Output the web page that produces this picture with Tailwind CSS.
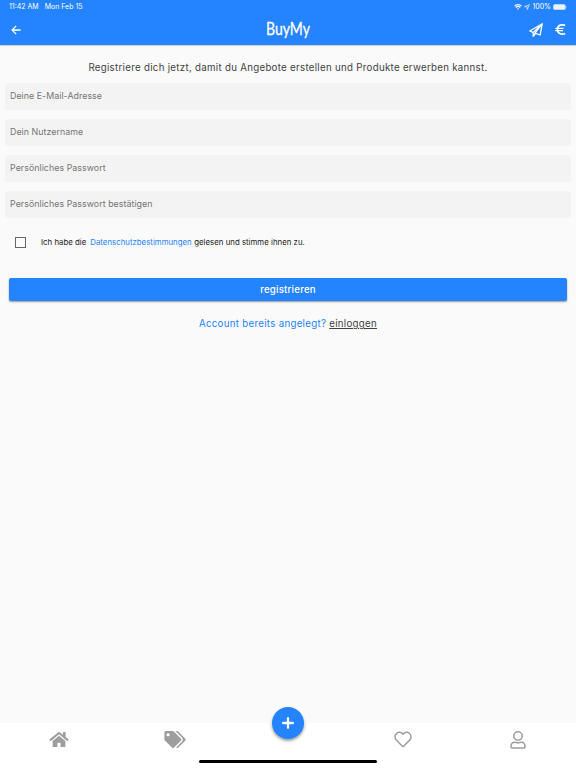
<!DOCTYPE html>
<html lang="de">
<head>
  <meta charset="UTF-8" />
  <meta name="viewport" content="width=device-width, initial-scale=1.0"/>
  <title>BuyMy</title>
  <script src="https://cdn.jsdelivr.net/npm/@tailwindcss/browser@4"></script>
</head>
<body class="bg-[#fafafa] font-['Inter',sans-serif] text-[#424242]">
  <div class="flex h-screen flex-col overflow-hidden">

    <header class="h-[45px] shrink-0 bg-[#2483ff] text-white shadow-[0_1px_1px_rgba(0,0,0,0.15)]">
      <div class="flex h-[14px] items-center justify-between px-[9px] text-[7px] leading-[14px]">
        <div class="flex gap-[6px]">
          <span>11:42 AM</span>
          <span>Mon Feb 15</span>
        </div>
        <div class="flex items-center gap-[2px]">
          <svg class="h-[6px] w-[8px]" viewBox="0 0 16 12" fill="none" stroke="currentColor" stroke-width="2.4">
            <path d="M1 4.2a10 10 0 0 1 14 0M3.6 7a6.3 6.3 0 0 1 8.8 0"/>
            <path d="M8 11.5L5.8 9.3a3.2 3.2 0 0 1 4.4 0z" fill="currentColor" stroke="none"/>
          </svg>
          <svg class="h-[6px] w-[6px]" viewBox="0 0 12 12" fill="none" stroke="currentColor" stroke-width="1.3">
            <path d="M11 1L1 5.5h5.5V11z"/>
          </svg>
          <span>100%</span>
          <svg class="h-[6px] w-[14px]" viewBox="0 0 14 6">
            <rect x=".25" y=".25" width="12.3" height="5.5" rx="1.5" fill="#fff" fill-opacity=".9"/>
            <path d="M13.2 2v2q.7-.3.7-1t-.7-1z" fill="#fff" fill-opacity=".6"/>
          </svg>
        </div>
      </div>

      <div class="grid h-[31px] grid-cols-3 items-center pl-[11px] pr-[10px]">
        <svg class="h-[10px] w-[10px]" viewBox="0 0 10 10" fill="none" stroke="currentColor" stroke-width="1.3">
          <path d="M9.6 5H1.2M5.2.9L1.1 5l4.1 4.1"/>
        </svg>
        <svg class="h-[31px] w-[64px] justify-self-center" viewBox="0 0 64 31">
          <text x="9" y="20.5" textLength="44" lengthAdjust="spacingAndGlyphs" font-family="Lato, sans-serif" font-size="17" fill="#fff" stroke="#fff" stroke-width=".3" stroke-linejoin="round">BuyMy</text>
        </svg>
        <div class="flex items-center justify-end gap-[12px]">
          <svg class="h-[14px] w-[14px]" viewBox="0 0 14 14" fill="none" stroke="currentColor" stroke-width="1.3" stroke-linejoin="round">
            <path d="M13.2.8L.8 8l3.4 1.5L13.2.8 11.2 12 6 10.1z"/>
            <path d="M4.2 9.5v3.8l2.2-2.8"/>
          </svg>
          <svg class="h-[11px] w-[11px]" viewBox="0 0 11 11" fill="none" stroke="currentColor" stroke-width="1.6">
            <path d="M10.2 1.5C9.3 1 8.5.9 7.5.9c-2.9 0-5 1.8-5 4.6s2.1 4.6 5 4.6c1 0 1.8-.1 2.7-.6"/>
            <path d="M.3 4.4h8.2M.3 6.6H8" stroke-width="1.2"/>
          </svg>
        </div>
      </div>
    </header>

    <main class="flex-1">
      <p class="mt-[15px] h-4 text-center text-[9.7px] leading-4 tracking-[0.3px]">Registriere dich jetzt, damit du Angebote erstellen und Produkte erwerben kannst.</p>

      <form class="mt-[7px]">
        <div class="flex flex-col gap-[9px] px-[5px]">
          <input type="text" placeholder="Deine E-Mail-Adresse" class="h-[27px] rounded-[3px] bg-[#f3f3f3] px-[5px] pb-[2px] text-[8.8px] tracking-[0.06px] placeholder:text-[#757575]"/>
          <input type="text" placeholder="Dein Nutzername" class="h-[27px] rounded-[3px] bg-[#f3f3f3] px-[5px] pb-[2px] text-[8.8px] tracking-[0.06px] placeholder:text-[#757575]"/>
          <input type="text" placeholder="Persönliches Passwort" class="h-[27px] rounded-[3px] bg-[#f3f3f3] px-[5px] pb-[2px] text-[8.8px] tracking-[0.06px] placeholder:text-[#757575]"/>
          <input type="text" placeholder="Persönliches Passwort bestätigen" class="h-[27px] rounded-[3px] bg-[#f3f3f3] px-[5px] pb-[2px] text-[8.8px] tracking-[0.06px] placeholder:text-[#757575]"/>
        </div>

        <label class="mt-[18px] flex h-3 items-center pl-[15px] text-[7.8px] leading-3 tracking-[0.02px] text-[#212121]">
          <span class="mr-[15px] size-[11px] border border-[#666]"></span>
          <span>Ich habe die</span>
          <span class="ml-[4px] mr-[2.5px] text-[#2483ff]">Datenschutzbestimmungen</span>
          <span>gelesen und stimme ihnen zu.</span>
        </label>

        <div class="mt-[30px] px-[9px]">
          <button type="button" class="block h-[23px] w-full rounded-[2px] bg-[#2483ff] pt-[2px] text-[9.7px] font-medium tracking-[0.2px] text-white shadow-[0_1px_2px_rgba(0,0,0,0.4)]">registrieren</button>
        </div>
      </form>

      <p class="mt-[15px] text-center text-[9.7px] leading-4 tracking-[0.3px]"><span class="text-[#2483ff]">Account bereits angelegt?</span> <a href="#" class="underline">einloggen</a></p>
    </main>

    <nav class="relative h-[45px] shrink-0 bg-white text-[#9e9e9e]">
      <!-- notch around the floating button -->
      <svg class="absolute left-[264px] top-0 h-[20px] w-[48px]" viewBox="0 0 48 20">
        <path d="M0 0q5 0 6 3a18.3 18.3 0 0 0 36 0q1-3 6-3z" fill="#fafafa"/>
      </svg>
      <div class="flex h-[33px] items-center pl-[49px]">
        <svg class="h-[17px] w-[20px]" viewBox="0 0 576 512" fill="currentColor">
          <path d="M280.37 148.26L96 300.11V464a16 16 0 0 0 16 16l112.06-.29a16 16 0 0 0 15.92-16V368a16 16 0 0 1 16-16h64a16 16 0 0 1 16 16v95.64a16 16 0 0 0 16 16.05L464 480a16 16 0 0 0 16-16V300L295.67 148.26a12.19 12.19 0 0 0-15.3 0zM571.6 251.47L488 182.56V44.05a12 12 0 0 0-12-12h-56a12 12 0 0 0-12 12v72.61L318.47 43a48 48 0 0 0-61 0L4.34 251.47a12 12 0 0 0-1.6 16.9l25.5 31A12 12 0 0 0 45.15 301l235.22-193.74a12.19 12.19 0 0 1 15.3 0L530.9 301a12 12 0 0 0 16.9-1.6l25.5-31a12 12 0 0 0-1.7-16.93z"/>
        </svg>
        <svg class="ml-[95px] h-[17px] w-[22px]" viewBox="0 0 640 512" fill="currentColor">
          <path d="M497.941 225.941L286.059 14.059A48 48 0 0 0 252.118 0H48C21.49 0 0 21.49 0 48v204.118a48 48 0 0 0 14.059 33.941l211.882 211.882c18.744 18.745 49.136 18.746 67.882 0l204.118-204.118c18.745-18.745 18.745-49.137 0-67.882zM112 160c-26.51 0-48-21.49-48-48s21.49-48 48-48 48 21.49 48 48-21.49 48-48 48zm513.941 133.823L421.823 497.941c-18.745 18.745-49.137 18.745-67.882 0l-.36-.36L527.64 323.522c16.999-16.999 26.36-39.6 26.36-63.64s-9.362-46.641-26.36-63.64L331.397 0h48.721a48 48 0 0 1 33.941 14.059l211.882 211.882c18.745 18.745 18.745 49.137 0 67.882z"/>
        </svg>
        <svg class="ml-[208px] h-[17px] w-[18px]" viewBox="0 0 18 17" fill="none" stroke="currentColor" stroke-width="1.5" stroke-linejoin="round">
          <path d="M9 3.2C7.3 1 4.5.8 2.7 2.3.5 4.2.5 7.2 2.3 9.1L8.4 15.3q.6.6 1.2 0l6.1-6.2c1.8-1.9 1.8-4.9-.4-6.8C13.5.8 10.7 1 9 3.2z"/>
        </svg>
        <svg class="ml-[98px] h-[18px] w-[16px]" viewBox="0 0 16 18" fill="none" stroke="currentColor" stroke-width="1.6">
          <circle cx="8" cy="5" r="4.2"/>
          <path d="M4.7 11.2c1.2 0 1.6.6 3.3.6s2.1-.6 3.3-.6a3.7 3.7 0 0 1 3.7 3.7v.9a1.2 1.2 0 0 1-1.2 1.2H2.2A1.2 1.2 0 0 1 1 15.8v-.9a3.7 3.7 0 0 1 3.7-3.7z"/>
        </svg>
      </div>
      <button type="button" class="absolute left-[272px] -top-[16px] flex size-[32px] items-center justify-center rounded-full bg-[#2483ff] text-white shadow-[0_2px_3px_rgba(0,0,0,0.35)]">
        <svg class="size-[12px]" viewBox="0 0 12 12" fill="none" stroke="currentColor" stroke-width="2.3" stroke-linecap="round">
          <path d="M6 1.2v9.6M1.2 6h9.6"/>
        </svg>
      </button>
      <div class="absolute left-[199px] top-[37px] h-[3px] w-[178px] rounded-full bg-black"></div>
    </nav>
  </div>
</body>
</html>
